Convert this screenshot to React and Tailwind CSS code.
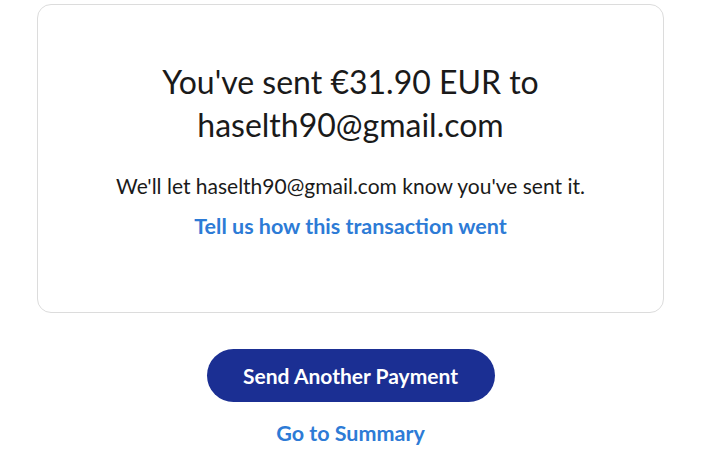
export default function App() {
  return (
    <div className="w-[720px] h-[464px] bg-white overflow-hidden" style={{ fontFamily: "Lato, 'Noto Sans', sans-serif" }}>
      <div className="w-[701px] flex flex-col items-center pt-[4px]">
        <div className="w-[627px] h-[309px] border border-[#dcdcdc] rounded-[14px] flex flex-col items-center pt-[55px]">
          <h1 className="text-[32px] leading-[43px] text-[#1a1a1a] text-center font-normal">
            You've sent €31.90 EUR to<br />haselth90@gmail.com
          </h1>
          <p className="mt-[26px] text-[21px] leading-[28px] text-[#1a1a1a]">We'll let haselth90@gmail.com know you've sent it.</p>
          <a className="mt-[12px] text-[21.5px] leading-[28px] font-bold text-[#2d7bd6]">Tell us how this transaction went</a>
        </div>
        <button className="mt-[36px] w-[288px] h-[53px] rounded-full bg-[#1b2f93] text-white text-[21px] font-bold">Send Another Payment</button>
        <a className="mt-[17px] text-[21.5px] leading-[28px] font-bold text-[#2d7bd6]">Go to Summary</a>
      </div>
    </div>
  );
}
